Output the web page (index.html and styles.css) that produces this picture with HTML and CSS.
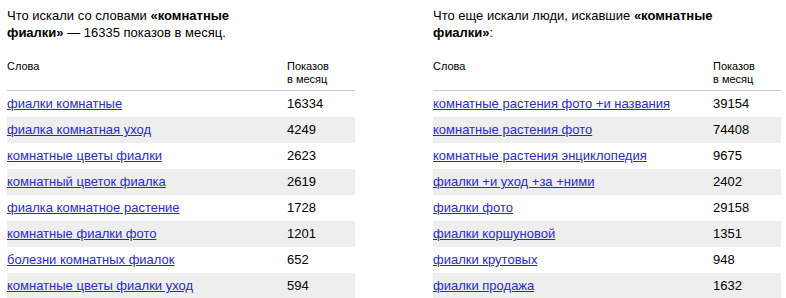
FILE: index.html
```html
<!DOCTYPE html>
<html lang="ru">
<head>
<meta charset="utf-8">
<link rel="stylesheet" href="styles.css">
</head>
<body>
<div class="page">
  <section class="block">
    <p class="title title-left">Что искали со словами <b>«комнатные фиалки»</b> — 16335 показов в месяц.</p>
    <table class="stats">
      <thead>
        <tr><th class="col-word">Слова</th><th class="col-num">Показов<br>в месяц</th></tr>
      </thead>
      <tbody>
        <tr><td><a href="#">фиалки комнатные</a></td><td>16334</td></tr>
        <tr><td><a href="#">фиалка комнатная уход</a></td><td>4249</td></tr>
        <tr><td><a href="#">комнатные цветы фиалки</a></td><td>2623</td></tr>
        <tr><td><a href="#">комнатный цветок фиалка</a></td><td>2619</td></tr>
        <tr><td><a href="#">фиалка комнатное растение</a></td><td>1728</td></tr>
        <tr><td><a href="#">комнатные фиалки фото</a></td><td>1201</td></tr>
        <tr><td><a href="#">болезни комнатных фиалок</a></td><td>652</td></tr>
        <tr><td><a href="#">комнатные цветы фиалки уход</a></td><td>594</td></tr>
      </tbody>
    </table>
  </section>
  <section class="block">
    <p class="title title-right">Что еще искали люди, искавшие <b>«комнатные фиалки»</b>:</p>
    <table class="stats">
      <thead>
        <tr><th class="col-word">Слова</th><th class="col-num">Показов<br>в месяц</th></tr>
      </thead>
      <tbody>
        <tr><td><a href="#">комнатные растения фото +и названия</a></td><td>39154</td></tr>
        <tr><td><a href="#">комнатные растения фото</a></td><td>74408</td></tr>
        <tr><td><a href="#">комнатные растения энциклопедия</a></td><td>9675</td></tr>
        <tr><td><a href="#">фиалки +и уход +за +ними</a></td><td>2402</td></tr>
        <tr><td><a href="#">фиалки фото</a></td><td>29158</td></tr>
        <tr><td><a href="#">фиалки коршуновой</a></td><td>1351</td></tr>
        <tr><td><a href="#">фиалки крутовых</a></td><td>948</td></tr>
        <tr><td><a href="#">фиалки продажа</a></td><td>1632</td></tr>
      </tbody>
    </table>
  </section>
</div>
</body>
</html>
```

FILE: styles.css
```css
html, body {
  margin: 0;
  padding: 0;
  background: #fff;
}
body {
  font-family: "Liberation Sans", Arial, sans-serif;
  font-size: 13px;
  color: #000;
}
.page {
  display: flex;
  gap: 78px;
  padding: 7px 0 0 7px;
}
.block {
  width: 348px;
  flex: none;
}
.title {
  margin: 0;
  line-height: 17px;
}
.title-left { width: 270px; }
.title-right { width: 300px; }
.stats {
  width: 348px;
  border-collapse: collapse;
  margin-top: 19px;
}
.stats th {
  font-weight: normal;
  font-size: 11px;
  line-height: 13px;
  text-align: left;
  vertical-align: top;
  padding: 0 0 4px 0;
  border-bottom: 1px solid #ccc;
}
.stats .col-word { width: 280px; }
.stats td {
  height: 26px;
  padding: 0;
  line-height: 16px;
  vertical-align: middle;
}
.stats tbody tr:nth-child(even) td {
  background: #eee;
}
.stats a {
  color: #2a2ac8;
  text-decoration: underline;
}
```
